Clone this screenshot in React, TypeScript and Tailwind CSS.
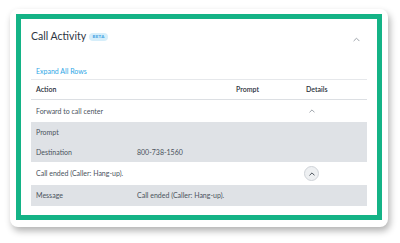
import React from "react";

// Small up-chevron used in the panel header and the rows
function ChevronUp({ className = "" }: { className?: string }) {
  return (
    <svg viewBox="0 0 8 5" className={className} fill="none">
      <polyline
        points="1,4 4,1 7,4"
        stroke="currentColor"
        strokeWidth="1.1"
        strokeLinecap="round"
        strokeLinejoin="round"
      />
    </svg>
  );
}

const detailRowsA = [
  { label: "Prompt", value: "" },
  { label: "Destination", value: "800-738-1560" },
];

export default function App() {
  return (
    <div
      className="w-[400px] h-[243px] bg-white pt-[9px] pl-[10px]"
      style={{ fontFamily: "Lato, 'Noto Sans', sans-serif" }}
    >
      <div className="w-[378px] h-[218px] rounded-[8px] bg-white px-[6px] pt-[5px] shadow-[2px_4px_7px_rgba(0,0,0,0.3)]">
        <div className="w-[366px] h-[206px] border-[5px] border-[#14b386] bg-white px-[10px]">
          {/* Title row */}
          <div className="mt-[11px] h-[13px] flex items-center justify-between">
            <div className="flex items-center">
              <span className="text-[10.5px] leading-none text-[#2d3542]">Call Activity</span>
              <span className="ml-[3px] h-[8px] px-[3.5px] rounded-full bg-[#d6eefa] text-[#3b9fe2] text-[4.5px] font-bold leading-[8px] tracking-[0.2px]">
                BETA
              </span>
            </div>
            <ChevronUp className="w-[7px] h-[5px] mr-[7px] mt-[5px] text-[#9aa0a8]" />
          </div>

          {/* Expand link */}
          <div className="mt-[21px] h-[16px] flex items-center pl-[5px] border-b border-[#e6e8eb]">
            <span className="text-[7px] text-[#2ea7e6]">Expand All Rows</span>
          </div>

          {/* Table header */}
          <div className="h-[20px] grid grid-cols-[205px_70px_1fr] items-center border-b border-[#dcdfe3] text-[7px] font-semibold text-[#2b323c]">
            <span className="pl-[5px]">Action</span>
            <span>Prompt</span>
            <span>Details</span>
          </div>

          {/* Row 1 */}
          <div className="h-[22px] grid grid-cols-[205px_68px_1fr] items-center text-[7px] text-[#4a525c]">
            <span className="pl-[5px]">Forward to call center</span>
            <span />
            <span className="w-[15px] flex justify-center">
              <ChevronUp className="w-[6px] h-[4px] text-[#8a9099]" />
            </span>
          </div>
          <div className="bg-[#dfe2e6] text-[7px] text-[#4a525c]">
            {detailRowsA.map((r) => (
              <div key={r.label} className="h-[20px] grid grid-cols-[106px_1fr] items-center">
                <span className="pl-[5px]">{r.label}</span>
                <span>{r.value}</span>
              </div>
            ))}
          </div>

          {/* Row 2 */}
          <div className="h-[23px] grid grid-cols-[205px_68px_1fr] items-center text-[7px] text-[#4a525c]">
            <span className="pl-[5px]">Call ended (Caller: Hang-up).</span>
            <span />
            <span className="w-[15px] h-[15px] rounded-full border border-[#cfd3d8] bg-[#eef0f2] flex items-center justify-center">
              <ChevronUp className="w-[6px] h-[4px] text-[#2b323c]" />
            </span>
          </div>
          <div className="h-[21px] bg-[#dfe2e6] grid grid-cols-[106px_1fr] items-center text-[7px] text-[#4a525c]">
            <span className="pl-[5px]">Message</span>
            <span>Call ended (Caller: Hang-up).</span>
          </div>
        </div>
      </div>
    </div>
  );
}
